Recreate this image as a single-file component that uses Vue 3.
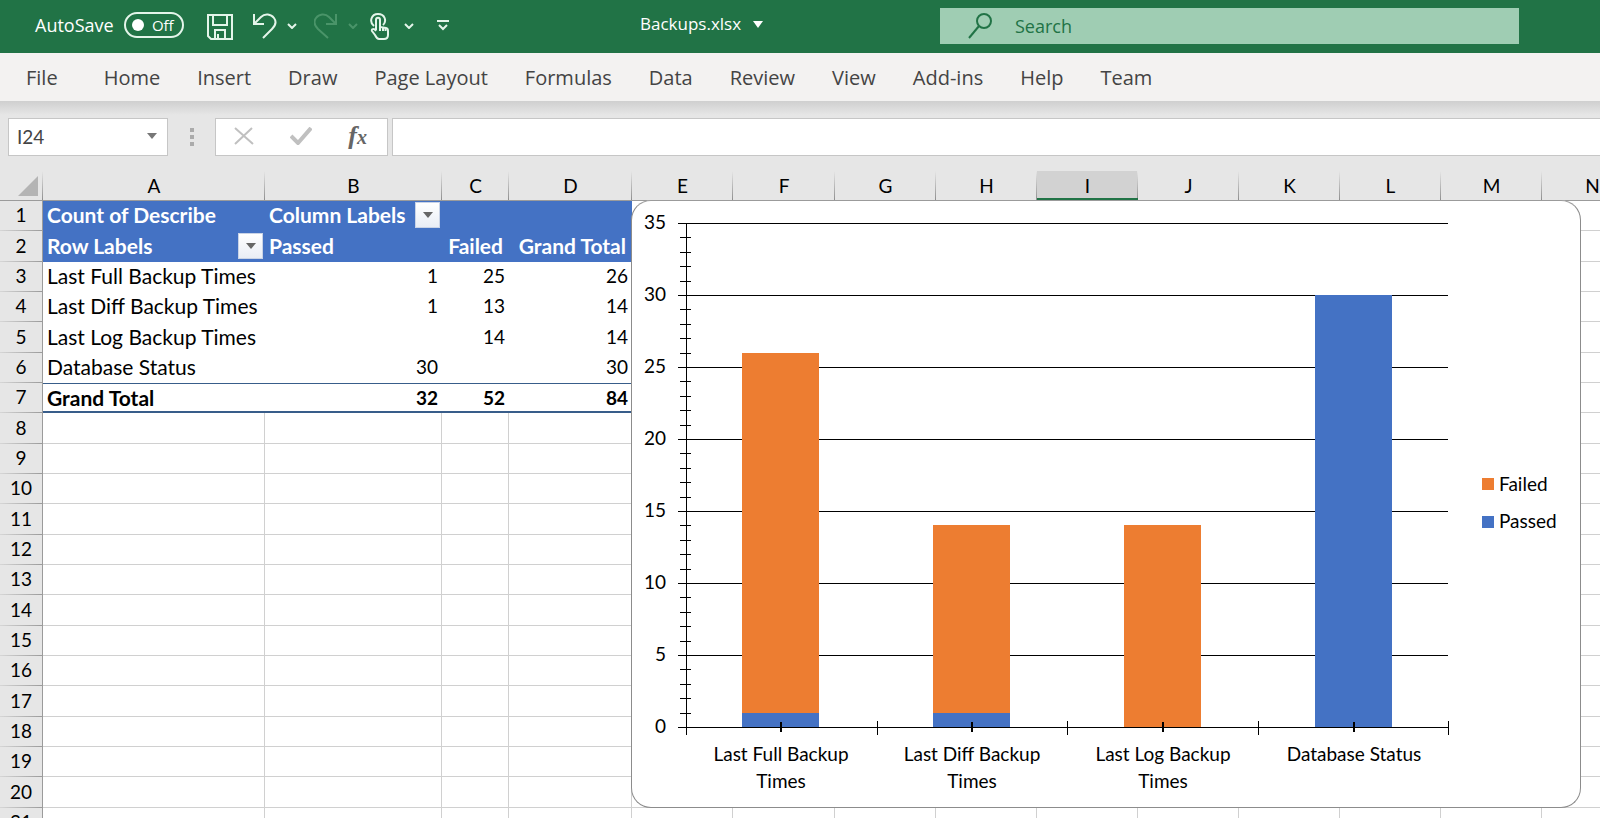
<script setup>
import { ref } from 'vue'

const autoSave = ref(false)
const search = ref('')
const cellName = ref('I24')
const formula = ref('')

const tabs = ['File', 'Home', 'Insert', 'Draw', 'Page Layout', 'Formulas', 'Data', 'Review', 'View', 'Add-ins', 'Help', 'Team']

const columns = [
  { name: 'A', width: 222 },
  { name: 'B', width: 177 },
  { name: 'C', width: 67 },
  { name: 'D', width: 123 },
  { name: 'E', width: 101 },
  { name: 'F', width: 102 },
  ...'GHIJKLMN'.split('').map((name) => ({ name, width: 101 })),
]
const rowHeaderWidth = 43
const sheetWidth = columns.reduce((sum, c) => sum + c.width, rowHeaderWidth)

const pivot = [
  ['Count of Describe', 'Column Labels', '', ''],
  ['Row Labels', 'Passed', 'Failed', 'Grand Total'],
  ['Last Full Backup Times', '1', '25', '26'],
  ['Last Diff Backup Times', '1', '13', '14'],
  ['Last Log Backup Times', '', '14', '14'],
  ['Database Status', '30', '', '30'],
  ['Grand Total', '32', '52', '84'],
]
const rows = Array.from({ length: 21 }, (_, i) => pivot[i] || [])

function cellClass(r, c) {
  if (c > 3 || r > 6) return 'plain'
  return {
    pivot: true,
    head: r < 2,
    total: r === 6,
    num: r > 1 && c > 0,
    right: r === 1 && c > 1,
  }
}
const hasFilter = (r, c) => (r === 0 && c === 1) || (r === 1 && c === 0)

/* chart geometry, in the chart's own coordinates */
const axisX = 54
const baseY = 526
const plotWidth = 762
const yOf = (v) => baseY - Math.round(v * 14.4)
const majors = [0, 5, 10, 15, 20, 25, 30, 35]
const minors = Array.from({ length: 35 }, (_, i) => i).filter((v) => v % 5)
const series = [
  { lines: ['Last Full Backup', 'Times'], passed: 1, failed: 25 },
  { lines: ['Last Diff Backup', 'Times'], passed: 1, failed: 13 },
  { lines: ['Last Log Backup', 'Times'], passed: 0, failed: 14 },
  { lines: ['Database Status'], passed: 30, failed: 0 },
].map((s, i) => ({ ...s, x: 149 + i * 191 }))
const edges = [0, 1, 2, 3, 4].map((i) => axisX + Math.round((plotWidth / 4) * i))
</script>

<template>
  <div class="app">
    <header class="titlebar">
      <div class="quick">
        <label class="autosave">
          <span>AutoSave</span>
          <input v-model="autoSave" type="checkbox" class="sr" />
          <span class="toggle"><i></i><span>Off</span></span>
        </label>
        <button class="tool save" aria-label="Save">
          <svg width="26" height="26" viewBox="0 0 26 26">
            <path d="M1 1H25V25H4L1 22Z M6 1V11H20V1 M8 25V16H18V25" />
            <path d="M11 20V25" />
          </svg>
        </button>
        <button class="tool undo" aria-label="Undo">
          <svg width="24" height="26" viewBox="0 0 24 26">
            <path d="M1 1V11H11 M1.500 10.500L8 4C12 0 18 1 21 5C24 9 22 13 19 16L10 25" />
          </svg>
        </button>
        <button class="tool chev" aria-label="Undo list">
          <svg width="10" height="6" viewBox="0 0 10 6"><path d="M1 1L5 5L9 1" /></svg>
        </button>
        <button class="tool redo faded" aria-label="Redo" disabled>
          <svg width="24" height="26" viewBox="0 0 24 26">
            <path d="M22 1V11H12 M21.500 10.500L15 4C11 0 5 1 2 5C-1 9 1 13 4 16L14 25" />
          </svg>
        </button>
        <button class="tool chev faded" aria-label="Redo list" disabled>
          <svg width="10" height="6" viewBox="0 0 10 6"><path d="M1 1L5 5L9 1" /></svg>
        </button>
        <button class="tool touch" aria-label="Touch or mouse mode">
          <svg width="20" height="27" viewBox="0 0 20 27">
            <path d="M4 13C-1 9 1 1 8 1C15 1 17 8 13 12" />
            <path d="M6 17V7C6 4 10 4 10 7V14L16 15C18 15.500 18 17 18 18V22C18 25 16 26 14 26H9C7 26 6 24 5 22L2 18C1 16 4 15 6 18" />
            <path d="M10 14V18 M13 15V18 M15.500 15V18" />
          </svg>
        </button>
        <button class="tool chev" aria-label="Touch mode list">
          <svg width="10" height="6" viewBox="0 0 10 6"><path d="M1 1L5 5L9 1" /></svg>
        </button>
        <button class="tool custom" aria-label="Customize toolbar">
          <svg width="12" height="11" viewBox="0 0 12 11"><path d="M0 1H12 M2 5L6 9L10 5" /></svg>
        </button>
      </div>
      <button class="filename">
        <span>Backups.xlsx</span>
        <svg width="10" height="7" viewBox="0 0 10 7"><path d="M0 0H10L5 7Z" /></svg>
      </button>
      <label class="search">
        <svg width="25" height="27" viewBox="0 0 25 27">
          <circle cx="16" cy="9" r="7" />
          <path d="M11 14L1 26" />
        </svg>
        <input v-model="search" type="text" placeholder="Search" aria-label="Search" />
      </label>
    </header>

    <nav class="tabs">
      <button v-for="t in tabs" :key="t">{{ t }}</button>
    </nav>

    <div class="formulabar">
      <div class="namebox">
        <input v-model="cellName" type="text" aria-label="Name box" />
        <button aria-label="Cell names">
          <svg width="10" height="6" viewBox="0 0 10 6"><path d="M0 0H10L5 6Z" /></svg>
        </button>
      </div>
      <div class="grip"><i></i><i></i><i></i></div>
      <div class="fxbox">
        <button aria-label="Cancel">
          <svg width="20" height="18" viewBox="0 0 20 18"><path d="M1 1L19 17 M18 1L1 17" stroke-width="2" /></svg>
        </button>
        <button aria-label="Enter">
          <svg width="22" height="18" viewBox="0 0 22 18"><path d="M1 9L8 16L21 1" stroke-width="4" /></svg>
        </button>
        <button class="fx" aria-label="Insert function">f<span>x</span></button>
      </div>
      <input v-model="formula" class="formula" type="text" aria-label="Formula" />
    </div>

    <main class="sheet">
      <table :style="{ width: sheetWidth + 'px' }">
        <colgroup>
          <col :style="{ width: rowHeaderWidth + 'px' }" />
          <col v-for="c in columns" :key="c.name" :style="{ width: c.width + 'px' }" />
        </colgroup>
        <thead>
          <tr>
            <th class="corner">
              <svg width="20" height="20" viewBox="0 0 20 20"><path d="M20 0V20H0Z" /></svg>
            </th>
            <th v-for="c in columns" :key="c.name" scope="col" :class="{ active: c.name === 'I' }">{{ c.name }}</th>
          </tr>
        </thead>
        <tbody>
          <tr v-for="(row, r) in rows" :key="r">
            <th scope="row">{{ r + 1 }}</th>
            <td v-for="(c, i) in columns" :key="c.name" :class="cellClass(r, i)">
              <div v-if="hasFilter(r, i)" class="filtered">
                <span>{{ row[i] }}</span>
                <button :aria-label="'Filter ' + row[i]">
                  <svg width="10" height="6" viewBox="0 0 10 6"><path d="M0 0H10L5 6Z" /></svg>
                </button>
              </div>
              <template v-else>{{ row[i] }}</template>
            </td>
          </tr>
        </tbody>
      </table>

      <figure class="chart">
        <svg width="948" height="606" viewBox="0 0 948 606" role="img" aria-label="Backup checks by result">
          <g class="lines">
            <path v-for="v in majors" :key="v" :d="`M${axisX - 8} ${yOf(v)}H${axisX + plotWidth}`" />
            <path v-for="v in minors" :key="v" :d="`M${axisX - 6} ${yOf(v)}H${axisX + 5}`" />
            <path :d="`M${axisX} ${yOf(35)}V${baseY}`" />
          </g>
          <g v-for="s in series" :key="s.x">
            <rect class="passed" :x="s.x - 39" :y="yOf(s.passed)" width="77" :height="baseY - yOf(s.passed)" />
            <rect class="failed" :x="s.x - 39" :y="yOf(s.passed + s.failed)" width="77" :height="yOf(s.passed) - yOf(s.passed + s.failed)" />
          </g>
          <g class="lines">
            <path :d="`M${axisX} ${baseY}H${axisX + plotWidth}`" />
            <path v-for="x in edges" :key="x" :d="`M${x} ${baseY - 6}V${baseY + 8}`" />
            <path v-for="s in series" :key="s.x" class="thick" :d="`M${s.x} ${baseY - 5}V${baseY + 5}`" />
          </g>
          <g text-anchor="end">
            <text v-for="v in majors" :key="v" x="34" :y="yOf(v) + 6">{{ v }}</text>
          </g>
          <g text-anchor="middle">
            <template v-for="s in series" :key="s.x">
              <text v-for="(l, n) in s.lines" :key="l" :x="s.x" :y="560 + n * 27">{{ l }}</text>
            </template>
          </g>
          <rect class="failed" x="850" y="277" width="12" height="12" />
          <text x="867" y="290">Failed</text>
          <rect class="passed" x="850" y="315" width="12" height="12" />
          <text x="867" y="327">Passed</text>
        </svg>
      </figure>
    </main>
  </div>
</template>

<style>
body {
  margin: 0;
}
</style>

<style scoped>
.app {
  display: flex;
  flex-direction: column;
  height: 100vh;
  overflow: hidden;
  background: #e6e6e6;
  font-family: "Open Sans", "Noto Sans", sans-serif;
}
button {
  margin: 0;
  padding: 0;
  border: 0;
  background: none;
  color: inherit;
  font: inherit;
}
input {
  min-width: 0;
  padding: 0;
  border: 0;
  outline: 0;
  background: none;
  font: inherit;
}
svg {
  display: block;
}
.sr {
  position: absolute;
  opacity: 0;
}

.titlebar {
  display: grid;
  grid-template-columns: 640px 300px 1fr;
  align-items: center;
  box-sizing: border-box;
  height: 53px;
  padding: 0 81px 2px 0;
  flex: none;
  background: #217346;
  color: #fff;
}
.quick {
  display: flex;
  align-items: center;
  padding-left: 35px;
}
.autosave {
  display: flex;
  align-items: center;
  gap: 10px;
  width: 172px;
  padding-bottom: 2px;
  font-size: 18px;
  line-height: 24px;
}
.toggle {
  display: flex;
  align-items: center;
  justify-content: space-between;
  box-sizing: border-box;
  width: 60px;
  height: 26px;
  padding: 0 8px 0 6px;
  border: 2px solid #e4f5ea;
  border-radius: 13px;
  font-size: 15px;
}
.toggle i {
  width: 12px;
  height: 12px;
  border-radius: 50%;
  background: #fff;
}
.tool svg {
  fill: none;
  stroke: #e4f5ea;
  stroke-width: 2;
}
.tool.faded svg {
  stroke: #4a9469;
}
.save {
  padding-top: 2px;
}
.undo {
  margin-left: 20px;
}
.chev {
  margin-left: 10px;
}
.redo {
  margin-left: 17px;
}
.touch {
  margin-left: 12px;
  padding-top: 2px;
}
.touch + .chev {
  margin-left: 14px;
}
.custom {
  margin-left: 23px;
}
.filename {
  display: flex;
  align-items: center;
  gap: 12px;
  padding-bottom: 3px;
  font-size: 17px;
  line-height: 24px;
}
.filename svg {
  fill: #fff;
}
.search {
  display: flex;
  align-items: center;
  gap: 22px;
  height: 36px;
  padding-left: 28px;
  background: #9fcdb3;
}
.search svg {
  fill: none;
  stroke: #217346;
  stroke-width: 2;
}
.search input {
  flex: 1;
  color: #217346;
  font-size: 18px;
}
.search input::placeholder {
  color: #217346;
  opacity: 1;
}

.tabs {
  display: flex;
  align-items: center;
  gap: 37px;
  height: 48px;
  padding-left: 26px;
  flex: none;
  background: #f3f2f1;
  color: #444;
  font-size: 20px;
}
.tabs button:first-child {
  margin-right: 9px;
}

.formulabar {
  display: flex;
  height: 38px;
  padding: 17px 0 15px 8px;
  flex: none;
  background: linear-gradient(#cfcfcf, #e6e6e6 14px);
}
.namebox,
.fxbox,
.formula {
  box-sizing: border-box;
  border: 1px solid #c6c6c6;
  background: #fff;
}
.namebox {
  display: flex;
  align-items: center;
  width: 160px;
  padding: 0 10px 2px 8px;
}
.namebox input {
  flex: 1;
  color: #444;
  font-family: Lato, sans-serif;
  font-size: 19px;
}
.namebox svg {
  fill: #777;
}
.grip {
  display: flex;
  flex-direction: column;
  align-items: center;
  justify-content: center;
  gap: 3px;
  width: 47px;
}
.grip i {
  width: 4px;
  height: 4px;
  background: #ababab;
}
.fxbox {
  display: flex;
  align-items: center;
  justify-content: space-between;
  width: 173px;
  padding: 0 20px 2px 18px;
}
.fxbox svg {
  fill: none;
  stroke: #c0c0c0;
}
.fx {
  color: #666;
  font-family: "Liberation Serif", serif;
  font-size: 26px;
  font-style: italic;
  font-weight: bold;
  line-height: 30px;
}
.fx span {
  font-size: 20px;
}
.formula {
  flex: 1;
  margin-left: 4px;
  border-right: 0;
}

.sheet {
  position: relative;
  flex: 1;
  overflow: hidden;
  background: #fff;
  color: #000;
  font-family: Lato, sans-serif;
  font-size: 19px;
}
table {
  table-layout: fixed;
  border-collapse: separate;
  border-spacing: 0;
  line-height: 26px;
}
th,
td {
  box-sizing: border-box;
  padding: 0 0 2px;
  white-space: nowrap;
}
th {
  font-weight: normal;
  text-align: center;
}
thead th {
  height: 30px;
  padding: 0;
  border-bottom: 1px solid #9b9b9b;
  background: linear-gradient(#e6e6e6, #8f8f8f) right / 1px 100% no-repeat #e6e6e6;
}
thead th.active {
  border-bottom-color: #217346;
  background-color: #d2d2d2;
  box-shadow: inset 0 -2px 0 #217346;
}
.corner svg {
  margin-left: 18px;
  fill: #b4b4b4;
}
tbody tr {
  height: 30px;
}
tbody tr:nth-child(3n + 2) {
  height: 31px;
}
tbody th {
  border-right: 1px solid #9b9b9b;
  background: linear-gradient(90deg, #d6d6d6, #9b9b9b) bottom / 100% 1px no-repeat #e6e6e6;
}
.plain {
  border-right: 1px solid #d0d0d0;
  border-bottom: 1px solid #d0d0d0;
}
.pivot {
  padding: 0 4px 2px;
  font-size: 21px;
}
.head {
  background: #4472c4;
  color: #fff;
  font-weight: bold;
}
.num,
.right {
  text-align: right;
}
.num {
  font-size: 19px;
}
.right {
  padding-right: 6px;
}
.total {
  padding-bottom: 0;
  border-top: 1px solid #385d8a;
  border-bottom: 2px solid #385d8a;
  font-weight: bold;
}
.filtered {
  display: flex;
  align-items: center;
  justify-content: space-between;
  margin-right: -2px;
}
.filtered button {
  display: flex;
  align-items: center;
  justify-content: center;
  box-sizing: border-box;
  width: 25px;
  height: 26px;
  border: 1px solid #c9d3e6;
  background: linear-gradient(#fff, #e9edf5);
}
.filtered svg {
  fill: #666;
}

.chart {
  position: absolute;
  top: 29px;
  left: 631px;
  margin: 0;
  border: 1px solid #8c8c8c;
  border-top-color: #9b9b9b;
  border-radius: 20px;
  background: #fff;
}
.lines path {
  fill: none;
  stroke: #000;
  stroke-width: 1;
  shape-rendering: crispEdges;
}
.lines .thick {
  stroke-width: 2;
}
.passed {
  fill: #4472c4;
}
.failed {
  fill: #ed7d31;
}
.chart text {
  fill: #000;
  font-size: 19px;
}
</style>
